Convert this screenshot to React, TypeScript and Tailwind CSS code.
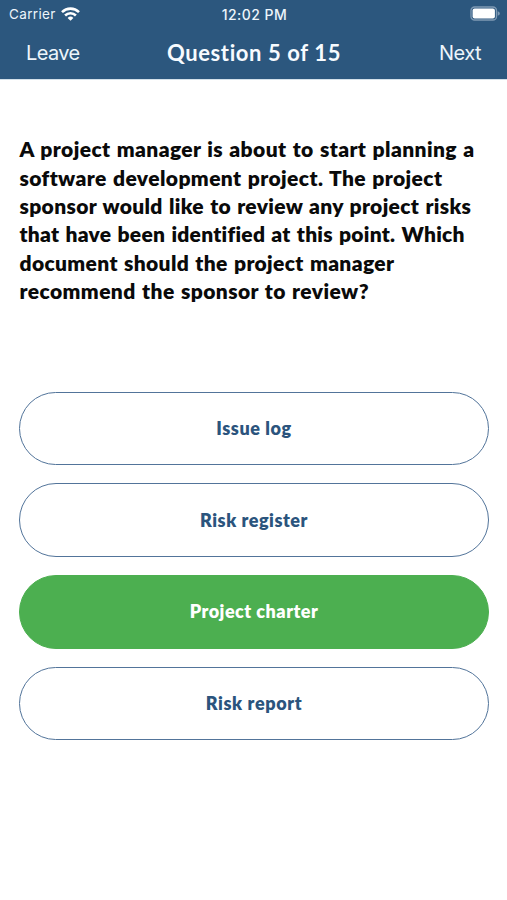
import clsx from 'clsx';

type Answer = {
  id: string;
  label: string;
  tracking: string;
  selected?: boolean;
};

const questionLines = [
  { text: 'A project manager is about to start planning a', tracking: 'tracking-[0.4px]' },
  { text: 'software development project. The project', tracking: 'tracking-[0.4px]' },
  { text: 'sponsor would like to review any project risks', tracking: 'tracking-[0.34px]' },
  { text: 'that have been identified at this point. Which', tracking: 'tracking-[0.27px]' },
  { text: 'document should the project manager', tracking: 'tracking-[0.35px]' },
  { text: 'recommend the sponsor to review?', tracking: 'tracking-[0.42px]' },
];

const answers: Answer[] = [
  { id: 'issue-log', label: 'Issue log', tracking: 'tracking-[0.6px]' },
  { id: 'risk-register', label: 'Risk register', tracking: 'tracking-[0.53px]' },
  { id: 'project-charter', label: 'Project charter', tracking: 'tracking-[0.48px]', selected: true },
  { id: 'risk-report', label: 'Risk report', tracking: 'tracking-[0.62px]' },
];

export default function App() {
  return (
    <div className="flex h-[900px] w-[507px] flex-col overflow-hidden bg-white font-['Lato',sans-serif]">
      <header className="h-[80px] shrink-0 border-b border-[#d3e0ea] bg-[#2c577e] text-[#edf5fb]">
        <StatusBar />
        <NavBar />
      </header>

      <main className="px-[19px] pt-[55.2px]">
        <h1 className="h-[256.5px] pl-[0.5px] text-[21px] font-extrabold leading-[28.4px] text-[#0a0a0a] [word-spacing:1px]">
          {questionLines.map((line) => (
            <span key={line.text} className={clsx('block whitespace-nowrap', line.tracking)}>
              {line.text}
            </span>
          ))}
        </h1>

        <div className="flex w-[470px] flex-col gap-[18.2px]">
          {answers.map((answer) => (
            <AnswerButton key={answer.id} answer={answer} />
          ))}
        </div>
      </main>
    </div>
  );
}

function StatusBar() {
  return (
    <div className="grid h-[27px] grid-cols-[1fr_auto_1fr] items-center pl-[9px] pr-[7px] font-['Inter',sans-serif] text-[13.5px]">
      <div className="flex items-center gap-[5.5px]">
        <span className="pt-px tracking-[0.35px]">Carrier</span>
        <WifiIcon />
      </div>
      <span className="pt-px text-center text-[14px] font-medium tracking-[0.45px]">12:02 PM</span>
      <div className="flex justify-end">
        <BatteryIcon />
      </div>
    </div>
  );
}

function NavBar() {
  return (
    <nav className="grid h-[50px] grid-cols-[1fr_auto_1fr] items-center pl-[26px] pr-[25px]">
      <button
        type="button"
        className="justify-self-start pt-px font-['Inter',sans-serif] text-[20px] tracking-[-0.6px]"
      >
        Leave
      </button>
      <span className="text-[22px] font-bold tracking-[0.6px] text-[#f7fbff]">Question 5 of 15</span>
      <button
        type="button"
        className="justify-self-end pr-px pt-px font-['Inter',sans-serif] text-[20px] tracking-[-0.55px]"
      >
        Next
      </button>
    </nav>
  );
}

function AnswerButton({ answer }: { answer: Answer }) {
  return (
    <button
      type="button"
      className={clsx(
        'flex h-[73.5px] w-full items-center justify-center rounded-full border-[1.5px] text-[18px] font-extrabold',
        answer.tracking,
        answer.selected
          ? 'border-[#4caf50] bg-[#4caf50] text-white'
          : 'border-[#52749a] bg-white text-[#2b547d]',
      )}
    >
      {answer.label}
    </button>
  );
}

function WifiIcon() {
  return (
    <svg width="19" height="14" viewBox="0 0 19 14" fill="none" stroke="#fff" strokeWidth="2.6">
      <path d="M1 5.1a12.2 12.2 0 0 1 17 0" />
      <path d="M4.1 8.5a7.7 7.7 0 0 1 10.8 0" />
      <path d="M9.5 13.8 6.6 10.9a4.1 4.1 0 0 1 5.8 0Z" fill="#fff" stroke="none" />
    </svg>
  );
}

function BatteryIcon() {
  return (
    <svg width="30" height="15" viewBox="0 0 30 15" fill="none">
      <rect x="1" y="1" width="25.5" height="13" rx="3.6" stroke="#7f9ab4" strokeWidth="1.3" />
      <rect x="2.6" y="2.6" width="22.3" height="9.8" rx="2" fill="#fff" />
      <path d="M27.7 5.2c1.6.6 2.1 1.4 2.1 2.3s-.5 1.7-2.1 2.3Z" fill="#7f9ab4" />
    </svg>
  );
}
